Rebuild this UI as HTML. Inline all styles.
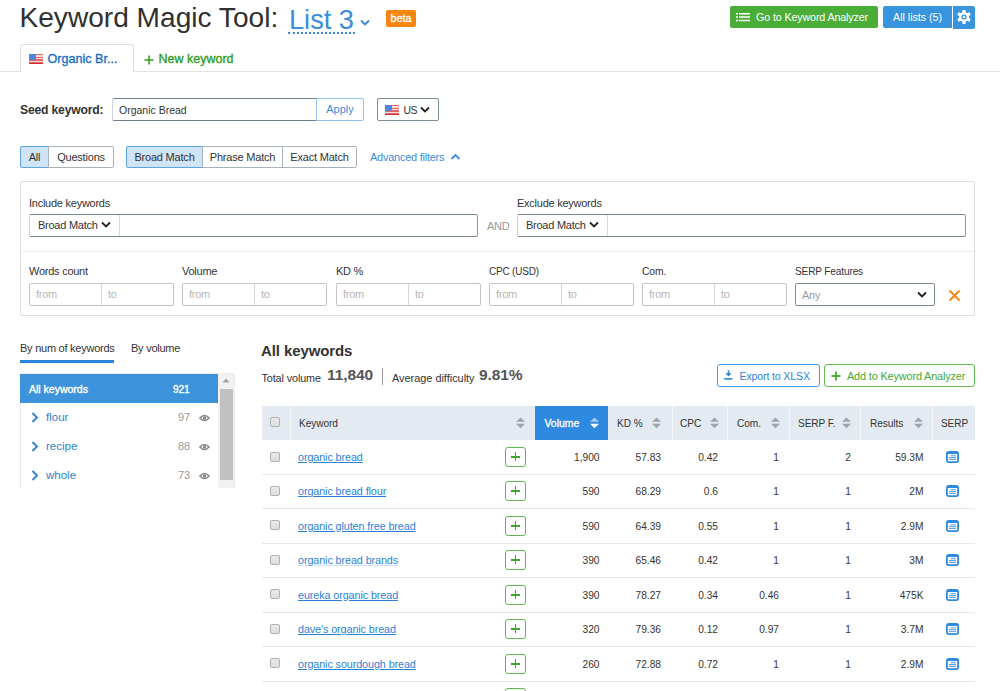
<!DOCTYPE html>
<html><head><meta charset="utf-8">
<style>
*{box-sizing:border-box;margin:0;padding:0}
html,body{width:1000px;height:691px;overflow:hidden;background:#fff}
body{font-family:"Liberation Sans",sans-serif;color:#333;position:relative;font-size:11px}
.a{position:absolute;white-space:nowrap}
.t{font-size:11px;letter-spacing:-0.25px}
/* header */
#title{left:19.5px;top:1.6px;font-size:28.1px;color:#303030;line-height:32px}
#list3{left:289px;top:4.5px;font-size:27.2px;color:#3b8ddb;line-height:30px}
#dots{left:288px;top:32px;width:67px;height:0;border-top:2px dotted #3b8ddb}
#beta{left:386px;top:10px;width:30px;height:17px;background:#f7860f;border-radius:2px;color:#fff;font-size:10.8px;line-height:17px;text-align:center;-webkit-text-stroke:0.3px #fff;letter-spacing:0}
.btn{position:absolute;color:#fff;font-size:10.6px;line-height:22px;text-align:center;border-radius:2px}
#gobtn{left:730px;top:6px;width:148px;height:22px;background:#4aad37}
#allbtn{left:883px;top:6px;width:69px;height:22px;background:#3894dc;border-radius:2px 0 0 2px}
#gear{left:953px;top:6px;width:22px;height:23px;background:#3894dc;border-radius:0 2px 2px 0}
#hline{left:0;top:71px;width:1000px;height:1px;background:#e3e3e3}
#tab{left:20px;top:44px;width:114px;height:28px;border:1px solid #dedede;border-bottom:none;border-radius:3px 3px 0 0;background:#fff}
#tabtxt{left:47.5px;top:52px;font-size:12.6px;color:#1e6fc4;-webkit-text-stroke:0.35px #1e6fc4;line-height:14px}
#newkw{left:158.5px;top:52px;font-size:12.5px;color:#2f9e22;-webkit-text-stroke:0.35px #2f9e22;line-height:14px}
/* seed */
#seedlbl{left:20px;top:102.5px;font-size:12.2px;font-weight:bold;color:#333;letter-spacing:-0.2px;line-height:14px}
#seedin{left:111.5px;top:98px;width:205.5px;height:23px;border:1px solid #728089;border-left-color:#cdd5da;border-right:none;border-radius:2px 0 0 2px}
#seedtxt{left:119px;top:103.7px;font-size:10.5px;color:#333;line-height:13px}
#apply{left:316px;top:98px;width:48px;height:23px;border:1px solid #8ec2ee;border-radius:0 2px 2px 0;color:#3b8ddb;font-size:11px;line-height:21.6px;text-align:center;background:#fff}
#us{left:377px;top:98px;width:62px;height:23px;border:1px solid #7f8d96;border-radius:2px}

.flag{position:absolute;width:14px;height:10px;background:repeating-linear-gradient(180deg,#e46a6a 0 0.8px,#f6dada 0.8px 1.6px);border-bottom:1px solid #d42a2a}
.flag:before{content:"";position:absolute;left:0;top:0;width:7px;height:6px;background:#4f86dc}
.seg{position:absolute;height:22px;border:1px solid #a8b2b9;font-size:11px;line-height:21px;text-align:center;color:#333;background:#fff;letter-spacing:-0.2px}
.seg.on{background:#cfe4f7;border-color:#5da4e2;color:#333}
#advf{left:370px;top:151px;color:#3b8ddb;font-size:11px;letter-spacing:-0.25px;line-height:13px}
#panel{left:20px;top:181px;width:955px;height:135px;border:1px solid #dcdcdc;border-radius:2px}
#pdiv{left:21px;top:251px;width:953px;height:1px;background:#ececec}
.lbl{position:absolute;font-size:11px;color:#333;letter-spacing:-0.25px;line-height:13px;white-space:nowrap}
.kin{position:absolute;height:23px;border:1px solid #c9d0d4;border-top-color:#78878f;border-bottom-color:#78878f;border-right-color:#8a979e;border-radius:2px;background:#fff}
.kin .dd{position:absolute;left:0;top:0;height:21px;border-right:1px solid #d5dadd;font-size:11px;color:#333;line-height:21px;padding-left:8px;letter-spacing:-0.25px}
.rng{position:absolute;width:145px;height:22.5px;border:1px solid #c4c4c4;border-radius:2px;background:#fff}
.rng .m{position:absolute;left:71px;top:0;width:1px;height:21px;background:#d6d6d6}
.rng .f,.rng .o{position:absolute;top:4px;font-size:11px;color:#b5b5b5;letter-spacing:-0.25px;line-height:13px}
.rng .f{left:6px}.rng .o{left:78px}

#bynum{left:20px;top:341.5px;font-size:11px;letter-spacing:-0.25px;color:#333;line-height:13px}
#bynumul{left:20px;top:360px;width:94px;height:2.5px;background:#2a84dc}
#byvol{left:131px;top:341.5px;font-size:11px;letter-spacing:-0.25px;color:#333;line-height:13px}
#lbox{left:20px;top:373px;width:215px;height:115px;border:1px solid #ececec;border-bottom:none;overflow:hidden}
#lsel{left:20px;top:374px;width:198px;height:29px;background:#3d92dc}
.li{position:absolute;font-size:11px;letter-spacing:-0.2px;line-height:13px;white-space:nowrap}
#sbtrack{left:218px;top:374px;width:16px;height:114px;background:#f1f1f1}
#sbthumb{left:220px;top:389px;width:13px;height:91px;background:#c1c1c1}
#allkw{left:261px;top:342px;font-size:15px;font-weight:bold;color:#333;line-height:17px;letter-spacing:-0.1px}
#totvol{left:261.5px;top:371.5px;font-size:10.8px;color:#333;line-height:13px;letter-spacing:-0.1px}
#totnum{left:327px;top:366px;font-size:15.5px;font-weight:bold;color:#555;line-height:17px;letter-spacing:-0.1px}
#vsep{left:382px;top:368px;width:1px;height:17px;background:#999}
#avgd{left:392px;top:372px;font-size:10.9px;color:#333;line-height:13px;letter-spacing:0px}
#avgnum{left:479px;top:366px;font-size:15.5px;font-weight:bold;color:#555;line-height:17px;letter-spacing:-0.1px}
.obtn{position:absolute;height:23px;border:1px solid;border-radius:3px;background:#fff}
#thead{left:262px;top:406px;width:713px;height:34px;background:#e4eaf1}
.th{position:absolute;top:406.8px;height:34px;font-size:10.1px;line-height:34px;color:#333;letter-spacing:-0.05px;white-space:nowrap}
.vd{position:absolute;top:406px;width:1px;height:34px;background:#f5f7f9}
.rowl{position:absolute;left:262px;width:713px;height:1px;background:#e3e7ea}
.cb{position:absolute;width:10px;height:10px;border:1px solid #b1b1b1;border-radius:2px;background:linear-gradient(#e9e9e9,#dedede)}
.kw{position:absolute;left:298px;font-size:10.8px;color:#2d7fd6;text-decoration:underline;line-height:13px;letter-spacing:-0.1px;white-space:nowrap}
.pb{position:absolute;left:505px;width:21px;height:19.5px;border:1px solid #5cb84a;border-radius:3px;background:#fff}
.pb:before{content:"";position:absolute;left:5px;top:7.9px;width:9px;height:1.8px;background:#3fa52f}
.pb:after{content:"";position:absolute;left:8.6px;top:4.3px;width:1.8px;height:9px;background:#3fa52f}
.num{position:absolute;font-size:10.2px;color:#333;line-height:13px;text-align:right;white-space:nowrap}
.si{position:absolute;left:946px;width:13px;height:12px;border:2px solid #2d8ae0;border-top-width:3px;border-radius:2px;background:#fff}
.si:before{content:"";position:absolute;left:1px;top:1px;width:7px;height:1.3px;background:#2d8ae0;box-shadow:0 2.5px 0 #2d8ae0,0 5px 0 #2d8ae0}
.srt{position:absolute;width:9px;height:13px;overflow:visible}
</style></head>
<body>
<div class="a" id="title">Keyword Magic Tool:</div>
<div class="a" id="list3">List 3</div>
<div class="a" id="dots"></div>
<svg class="a" style="left:360px;top:18.5px" width="10" height="8" viewBox="0 0 10 8"><path d="M1 1.5 L5 5.5 L9 1.5" fill="none" stroke="#3b8ddb" stroke-width="1.9"/></svg>
<div class="a" id="beta">beta</div>

<div class="btn" id="gobtn"></div>
<svg class="a" style="left:736px;top:12px" width="14" height="10" viewBox="0 0 14 10"><path d="M0 1.7 H2 M3 1.7 H14 M0 5 H2 M3 5 H14 M0 8.5 H2 M3 8.5 H14" fill="none" stroke="#fff" stroke-width="1.6"/></svg>
<div class="a" style="left:756px;top:11px;font-size:10.75px;color:#fff;line-height:13px;letter-spacing:-0.15px">Go to Keyword Analyzer</div>
<div class="btn" id="allbtn">All lists (5)</div>
<div class="btn" id="gear"></div>
<svg class="a" style="left:957px;top:10px" width="14" height="14" viewBox="-7 -7 14 14"><g fill="#fff"><circle r="5"/><rect x="-1.6" y="-7" width="3.2" height="14" rx="0.3"/><rect x="-1.6" y="-7" width="3.2" height="14" rx="0.3" transform="rotate(60)"/><rect x="-1.6" y="-7" width="3.2" height="14" rx="0.3" transform="rotate(120)"/></g><circle r="2.6" fill="#3894dc"/><circle r="1.3" fill="#fff"/></svg>

<div class="a" id="hline"></div>
<div class="a" id="tab"></div>
<div class="a" id="tabtxt">Organic Br...</div>
<svg class="a" style="left:144px;top:54.5px" width="10" height="10" viewBox="0 0 10 10"><path d="M5 0.5 V9.5 M0.5 5 H9.5" fill="none" stroke="#2f9e22" stroke-width="1.6"/></svg>
<div class="a" id="newkw">New keyword</div>

<div class="a" id="seedlbl">Seed keyword:</div>
<div class="a" id="seedin"></div>
<div class="a" id="seedtxt">Organic Bread</div>
<div class="a" id="apply">Apply</div>
<div class="a" id="us"></div>


<div class="flag" style="left:29px;top:54px"></div>
<div class="flag" style="left:385px;top:105px"></div>
<div class="a" style="left:403.5px;top:103.5px;font-size:10.4px;color:#333;line-height:13px;letter-spacing:-0.5px">US</div>
<svg class="a" style="left:419.8px;top:105.8px" width="10" height="8" viewBox="0 0 10 8"><path d="M1 1.5 L5 5.5 L9 1.5" fill="none" stroke="#222" stroke-width="1.8"/></svg>

<div class="seg on" style="left:20px;top:146px;width:29px;border-radius:2px 0 0 2px">All</div>
<div class="seg" style="left:48px;top:146px;width:66px;border-radius:0 2px 2px 0">Questions</div>
<div class="seg on" style="left:126px;top:146px;width:77px;border-radius:2px 0 0 2px">Broad Match</div>
<div class="seg" style="left:202px;top:146px;width:81px">Phrase Match</div>
<div class="seg" style="left:282px;top:146px;width:75px;border-radius:0 2px 2px 0">Exact Match</div>
<div class="a" id="advf">Advanced filters</div>
<svg class="a" style="left:450px;top:153px" width="11" height="8" viewBox="0 0 11 8"><path d="M1.5 6 L5.5 2 L9.5 6" fill="none" stroke="#3b8ddb" stroke-width="1.8"/></svg>

<div class="a" id="panel"></div>
<div class="a" id="pdiv"></div>
<div class="lbl" style="left:29px;top:197px">Include keywords</div>
<div class="kin" style="left:29px;top:214px;width:449px"><div class="dd" style="width:90px">Broad Match</div></div>
<svg class="a" style="left:101px;top:221px" width="10" height="8" viewBox="0 0 10 8"><path d="M1 1.5 L5 5.5 L9 1.5" fill="none" stroke="#222" stroke-width="1.8"/></svg>
<div class="lbl" style="left:487px;top:220px;color:#999">AND</div>
<div class="lbl" style="left:517px;top:197px">Exclude keywords</div>
<div class="kin" style="left:517px;top:214px;width:449px"><div class="dd" style="width:90px">Broad Match</div></div>
<svg class="a" style="left:589px;top:221px" width="10" height="8" viewBox="0 0 10 8"><path d="M1 1.5 L5 5.5 L9 1.5" fill="none" stroke="#222" stroke-width="1.8"/></svg>

<div class="lbl" style="left:29px;top:265px">Words count</div>
<div class="rng" style="left:29px;top:283px"><div class="m"></div><div class="f">from</div><div class="o">to</div></div>
<div class="lbl" style="left:182px;top:265px">Volume</div>
<div class="rng" style="left:182px;top:283px"><div class="m"></div><div class="f">from</div><div class="o">to</div></div>
<div class="lbl" style="left:336px;top:265px">KD %</div>
<div class="rng" style="left:336px;top:283px"><div class="m"></div><div class="f">from</div><div class="o">to</div></div>
<div class="lbl" style="left:489px;top:265px;font-size:10px;letter-spacing:-0.2px">CPC (USD)</div>
<div class="rng" style="left:489px;top:283px"><div class="m"></div><div class="f">from</div><div class="o">to</div></div>
<div class="lbl" style="left:642px;top:265px;font-size:10.3px;letter-spacing:-0.1px">Com.</div>
<div class="rng" style="left:642px;top:283px"><div class="m"></div><div class="f">from</div><div class="o">to</div></div>
<div class="lbl" style="left:795px;top:265px;font-size:10.1px;letter-spacing:-0.15px">SERP Features</div>
<div class="a" style="left:795px;top:283px;width:140px;height:23px;border:1px solid #7d8b94;border-radius:2px"></div>
<div class="lbl" style="left:802px;top:289px;color:#999">Any</div>
<svg class="a" style="left:916.5px;top:291px" width="10" height="8" viewBox="0 0 10 8"><path d="M1 1.5 L5 5.5 L9 1.5" fill="none" stroke="#222" stroke-width="1.8"/></svg>
<svg class="a" style="left:948px;top:289px" width="13" height="13" viewBox="0 0 13 13"><path d="M1.5 1.5 L11.5 11.5 M11.5 1.5 L1.5 11.5" fill="none" stroke="#f7860f" stroke-width="2"/></svg>

<div class="a" id="bynum">By num of keywords</div>
<div class="a" id="bynumul"></div>
<div class="a" id="byvol">By volume</div>
<div class="a" id="lbox"></div>
<div class="a" id="lsel"></div>
<div class="li" style="left:29px;top:382.5px;color:#fff;font-size:10.5px;-webkit-text-stroke:0.35px #fff;letter-spacing:0">All keywords</div>
<div class="li" style="left:173px;top:382.5px;color:#fff;font-size:10px;-webkit-text-stroke:0.35px #fff;letter-spacing:0">921</div>
<svg class="a" style="left:31px;top:411.5px" width="8" height="11" viewBox="0 0 8 11"><path d="M1.5 1 L6 5.5 L1.5 10" fill="none" stroke="#2d7fd6" stroke-width="1.8"/></svg>
<div class="li" style="font-size:11.5px;letter-spacing:0;left:46px;top:410.5px;color:#2d7fd6">flour</div>
<div class="li" style="left:178px;top:410.5px;color:#999">97</div>
<svg class="a" style="left:198.5px;top:413.5px" width="11" height="8" viewBox="0 0 11 8"><path d="M0.9 4 Q5.5 -1 10.1 4 Q5.5 9 0.9 4 Z" fill="none" stroke="#8a8a8a" stroke-width="1.5"/><circle cx="5.5" cy="4" r="1.8" fill="#8a8a8a"/></svg>
<svg class="a" style="left:31px;top:440.8px" width="8" height="11" viewBox="0 0 8 11"><path d="M1.5 1 L6 5.5 L1.5 10" fill="none" stroke="#2d7fd6" stroke-width="1.8"/></svg>
<div class="li" style="font-size:11.5px;letter-spacing:0;left:46px;top:439.8px;color:#2d7fd6">recipe</div>
<div class="li" style="left:178px;top:439.8px;color:#999">88</div>
<svg class="a" style="left:198.5px;top:442.8px" width="11" height="8" viewBox="0 0 11 8"><path d="M0.9 4 Q5.5 -1 10.1 4 Q5.5 9 0.9 4 Z" fill="none" stroke="#8a8a8a" stroke-width="1.5"/><circle cx="5.5" cy="4" r="1.8" fill="#8a8a8a"/></svg>
<svg class="a" style="left:31px;top:470.0px" width="8" height="11" viewBox="0 0 8 11"><path d="M1.5 1 L6 5.5 L1.5 10" fill="none" stroke="#2d7fd6" stroke-width="1.8"/></svg>
<div class="li" style="font-size:11.5px;letter-spacing:0;left:46px;top:469.0px;color:#2d7fd6">whole</div>
<div class="li" style="left:178px;top:469.0px;color:#999">73</div>
<svg class="a" style="left:198.5px;top:472.0px" width="11" height="8" viewBox="0 0 11 8"><path d="M0.9 4 Q5.5 -1 10.1 4 Q5.5 9 0.9 4 Z" fill="none" stroke="#8a8a8a" stroke-width="1.5"/><circle cx="5.5" cy="4" r="1.8" fill="#8a8a8a"/></svg>

<div class="a" id="sbtrack"></div>
<div class="a" id="sbthumb"></div>
<svg class="a" style="left:222px;top:378px" width="8" height="5" viewBox="0 0 8 5"><path d="M0.5 4.5 L4 0.5 L7.5 4.5 Z" fill="#a3a3a3"/></svg>

<div class="a" id="allkw">All keywords</div>
<div class="a" id="totvol">Total volume</div>
<div class="a" id="totnum">11,840</div>
<div class="a" id="vsep"></div>
<div class="a" id="avgd">Average difficulty</div>
<div class="a" id="avgnum">9.81%</div>

<div class="obtn" style="left:717px;top:364px;width:103px;border-color:#4b9be3"></div>
<svg class="a" style="left:724px;top:369px" width="9" height="12" viewBox="0 0 9 12"><path d="M4.5 1.2 V5" fill="none" stroke="#2d85d8" stroke-width="1.6"/><path d="M1.4 4.3 H7.6 L4.5 7.6 Z" fill="#2d85d8"/><path d="M0.2 9.9 H8.4" fill="none" stroke="#2d85d8" stroke-width="1.6"/></svg>
<div class="a" style="left:739.5px;top:370px;font-size:10.6px;color:#2d85d8;line-height:13px;letter-spacing:-0.15px">Export to XLSX</div>
<div class="obtn" style="left:824px;top:364px;width:151px;border-color:#62bb52"></div>
<svg class="a" style="left:831px;top:370.7px" width="10" height="10" viewBox="0 0 10 10"><path d="M5 0.5 V9.5 M0.5 5 H9.5" fill="none" stroke="#4aab38" stroke-width="1.8"/></svg>
<div class="a" style="left:847px;top:370px;font-size:10.9px;color:#45a933;line-height:13px;letter-spacing:-0.15px">Add to Keyword Analyzer</div>

<div class="a" id="thead"></div>
<div class="a" style="left:535px;top:406px;width:73px;height:34px;background:#2d8ae0"></div>
<div class="cb" style="left:270px;top:417px"></div>
<div class="vd" style="left:290px"></div>
<div class="vd" style="left:672px"></div>
<div class="vd" style="left:727px"></div>
<div class="vd" style="left:789px"></div>
<div class="vd" style="left:860px"></div>
<div class="vd" style="left:932px"></div>
<div class="th" style="left:299px">Keyword</div>
<div class="th" style="left:544.5px;top:406.5px;color:#fff;font-size:10.4px;-webkit-text-stroke:0.3px #fff;letter-spacing:0">Volume</div>
<div class="th" style="left:617px">KD %</div>
<div class="th" style="left:680px">CPC</div>
<div class="th" style="left:737px">Com.</div>
<div class="th" style="left:798px">SERP F.</div>
<div class="th" style="left:870px">Results</div>
<div class="th" style="left:941px;font-size:10px">SERP</div>
<svg class="srt" style="left:516px;top:416px" viewBox="0 0 9 13"><path d="M0 5.8 L4.5 1.4 L9 5.8 Z" fill="#9aa5ad"/><path d="M0 7.8 L4.5 12.2 L9 7.8 Z" fill="#9aa5ad"/></svg>
<svg class="srt" style="left:652px;top:416px" viewBox="0 0 9 13"><path d="M0 5.8 L4.5 1.4 L9 5.8 Z" fill="#9aa5ad"/><path d="M0 7.8 L4.5 12.2 L9 7.8 Z" fill="#9aa5ad"/></svg>
<svg class="srt" style="left:709.5px;top:416px" viewBox="0 0 9 13"><path d="M0 5.8 L4.5 1.4 L9 5.8 Z" fill="#9aa5ad"/><path d="M0 7.8 L4.5 12.2 L9 7.8 Z" fill="#9aa5ad"/></svg>
<svg class="srt" style="left:770.5px;top:416px" viewBox="0 0 9 13"><path d="M0 5.8 L4.5 1.4 L9 5.8 Z" fill="#9aa5ad"/><path d="M0 7.8 L4.5 12.2 L9 7.8 Z" fill="#9aa5ad"/></svg>
<svg class="srt" style="left:842px;top:416px" viewBox="0 0 9 13"><path d="M0 5.8 L4.5 1.4 L9 5.8 Z" fill="#9aa5ad"/><path d="M0 7.8 L4.5 12.2 L9 7.8 Z" fill="#9aa5ad"/></svg>
<svg class="srt" style="left:914px;top:416px" viewBox="0 0 9 13"><path d="M0 5.8 L4.5 1.4 L9 5.8 Z" fill="#9aa5ad"/><path d="M0 7.8 L4.5 12.2 L9 7.8 Z" fill="#9aa5ad"/></svg>
<svg class="srt" style="left:590px;top:416px" viewBox="0 0 9 13"><path d="M0 5.8 L4.5 1.4 L9 5.8 Z" fill="#a9cdf0"/><path d="M0 7.8 L4.5 12.2 L9 7.8 Z" fill="#fff"/></svg>
<div class="cb" style="left:270px;top:452px"></div>
<div class="kw" style="top:451.0px">organic bread</div>
<div class="pb" style="top:447px"></div>
<div class="num" style="left:539.5px;width:60px;top:451.0px">1,900</div>
<div class="num" style="left:601px;width:60px;top:451.0px">57.83</div>
<div class="num" style="left:658px;width:60px;top:451.0px">0.42</div>
<div class="num" style="left:719px;width:60px;top:451.0px">1</div>
<div class="num" style="left:791px;width:60px;top:451.0px">2</div>
<div class="num" style="left:863.5px;width:60px;top:451.0px">59.3M</div>
<svg class="a" style="left:946px;top:451px" width="13" height="12" viewBox="0 0 13 12"><rect x="0.9" y="0.9" width="11.2" height="10.2" rx="1.8" fill="#fff" stroke="#2d8ae0" stroke-width="1.8"/><rect x="1" y="1" width="11" height="2" fill="#2d8ae0"/><path d="M4.5 4.8 H10 M3 6.6 H10 M3 8.4 H10" stroke="#2d8ae0" stroke-width="0.85"/></svg>
<div class="rowl" style="top:473.9px"></div>
<div class="cb" style="left:270px;top:486px"></div>
<div class="kw" style="top:485.4px">organic bread flour</div>
<div class="pb" style="top:481px"></div>
<div class="num" style="left:539.5px;width:60px;top:485.4px">590</div>
<div class="num" style="left:601px;width:60px;top:485.4px">68.29</div>
<div class="num" style="left:658px;width:60px;top:485.4px">0.6</div>
<div class="num" style="left:719px;width:60px;top:485.4px">1</div>
<div class="num" style="left:791px;width:60px;top:485.4px">1</div>
<div class="num" style="left:863.5px;width:60px;top:485.4px">2M</div>
<svg class="a" style="left:946px;top:485px" width="13" height="12" viewBox="0 0 13 12"><rect x="0.9" y="0.9" width="11.2" height="10.2" rx="1.8" fill="#fff" stroke="#2d8ae0" stroke-width="1.8"/><rect x="1" y="1" width="11" height="2" fill="#2d8ae0"/><path d="M4.5 4.8 H10 M3 6.6 H10 M3 8.4 H10" stroke="#2d8ae0" stroke-width="0.85"/></svg>
<div class="rowl" style="top:508.4px"></div>
<div class="cb" style="left:270px;top:520px"></div>
<div class="kw" style="top:519.9px">organic gluten free bread</div>
<div class="pb" style="top:516px"></div>
<div class="num" style="left:539.5px;width:60px;top:519.9px">590</div>
<div class="num" style="left:601px;width:60px;top:519.9px">64.39</div>
<div class="num" style="left:658px;width:60px;top:519.9px">0.55</div>
<div class="num" style="left:719px;width:60px;top:519.9px">1</div>
<div class="num" style="left:791px;width:60px;top:519.9px">1</div>
<div class="num" style="left:863.5px;width:60px;top:519.9px">2.9M</div>
<svg class="a" style="left:946px;top:520px" width="13" height="12" viewBox="0 0 13 12"><rect x="0.9" y="0.9" width="11.2" height="10.2" rx="1.8" fill="#fff" stroke="#2d8ae0" stroke-width="1.8"/><rect x="1" y="1" width="11" height="2" fill="#2d8ae0"/><path d="M4.5 4.8 H10 M3 6.6 H10 M3 8.4 H10" stroke="#2d8ae0" stroke-width="0.85"/></svg>
<div class="rowl" style="top:542.8px"></div>
<div class="cb" style="left:270px;top:555px"></div>
<div class="kw" style="text-decoration-color:#c9def4;top:554.3px">organic bread brands</div>
<div class="pb" style="top:550px"></div>
<div class="num" style="left:539.5px;width:60px;top:554.3px">390</div>
<div class="num" style="left:601px;width:60px;top:554.3px">65.46</div>
<div class="num" style="left:658px;width:60px;top:554.3px">0.42</div>
<div class="num" style="left:719px;width:60px;top:554.3px">1</div>
<div class="num" style="left:791px;width:60px;top:554.3px">1</div>
<div class="num" style="left:863.5px;width:60px;top:554.3px">3M</div>
<svg class="a" style="left:946px;top:554px" width="13" height="12" viewBox="0 0 13 12"><rect x="0.9" y="0.9" width="11.2" height="10.2" rx="1.8" fill="#fff" stroke="#2d8ae0" stroke-width="1.8"/><rect x="1" y="1" width="11" height="2" fill="#2d8ae0"/><path d="M4.5 4.8 H10 M3 6.6 H10 M3 8.4 H10" stroke="#2d8ae0" stroke-width="0.85"/></svg>
<div class="rowl" style="top:577.2px"></div>
<div class="cb" style="left:270px;top:589px"></div>
<div class="kw" style="top:588.7px">eureka organic bread</div>
<div class="pb" style="top:585px"></div>
<div class="num" style="left:539.5px;width:60px;top:588.7px">390</div>
<div class="num" style="left:601px;width:60px;top:588.7px">78.27</div>
<div class="num" style="left:658px;width:60px;top:588.7px">0.34</div>
<div class="num" style="left:719px;width:60px;top:588.7px">0.46</div>
<div class="num" style="left:791px;width:60px;top:588.7px">1</div>
<div class="num" style="left:863.5px;width:60px;top:588.7px">475K</div>
<svg class="a" style="left:946px;top:589px" width="13" height="12" viewBox="0 0 13 12"><rect x="0.9" y="0.9" width="11.2" height="10.2" rx="1.8" fill="#fff" stroke="#2d8ae0" stroke-width="1.8"/><rect x="1" y="1" width="11" height="2" fill="#2d8ae0"/><path d="M4.5 4.8 H10 M3 6.6 H10 M3 8.4 H10" stroke="#2d8ae0" stroke-width="0.85"/></svg>
<div class="rowl" style="top:611.6px"></div>
<div class="cb" style="left:270px;top:624px"></div>
<div class="kw" style="top:623.1px">dave's organic bread</div>
<div class="pb" style="top:619px"></div>
<div class="num" style="left:539.5px;width:60px;top:623.1px">320</div>
<div class="num" style="left:601px;width:60px;top:623.1px">79.36</div>
<div class="num" style="left:658px;width:60px;top:623.1px">0.12</div>
<div class="num" style="left:719px;width:60px;top:623.1px">0.97</div>
<div class="num" style="left:791px;width:60px;top:623.1px">1</div>
<div class="num" style="left:863.5px;width:60px;top:623.1px">3.7M</div>
<svg class="a" style="left:946px;top:623px" width="13" height="12" viewBox="0 0 13 12"><rect x="0.9" y="0.9" width="11.2" height="10.2" rx="1.8" fill="#fff" stroke="#2d8ae0" stroke-width="1.8"/><rect x="1" y="1" width="11" height="2" fill="#2d8ae0"/><path d="M4.5 4.8 H10 M3 6.6 H10 M3 8.4 H10" stroke="#2d8ae0" stroke-width="0.85"/></svg>
<div class="rowl" style="top:646.1px"></div>
<div class="cb" style="left:270px;top:658px"></div>
<div class="kw" style="top:657.6px">organic sourdough bread</div>
<div class="pb" style="top:654px"></div>
<div class="num" style="left:539.5px;width:60px;top:657.6px">260</div>
<div class="num" style="left:601px;width:60px;top:657.6px">72.88</div>
<div class="num" style="left:658px;width:60px;top:657.6px">0.72</div>
<div class="num" style="left:719px;width:60px;top:657.6px">1</div>
<div class="num" style="left:791px;width:60px;top:657.6px">1</div>
<div class="num" style="left:863.5px;width:60px;top:657.6px">2.9M</div>
<svg class="a" style="left:946px;top:658px" width="13" height="12" viewBox="0 0 13 12"><rect x="0.9" y="0.9" width="11.2" height="10.2" rx="1.8" fill="#fff" stroke="#2d8ae0" stroke-width="1.8"/><rect x="1" y="1" width="11" height="2" fill="#2d8ae0"/><path d="M4.5 4.8 H10 M3 6.6 H10 M3 8.4 H10" stroke="#2d8ae0" stroke-width="0.85"/></svg>
<div class="rowl" style="top:680.5px"></div>
<div class="pb" style="top:688px"></div>
</body></html>
